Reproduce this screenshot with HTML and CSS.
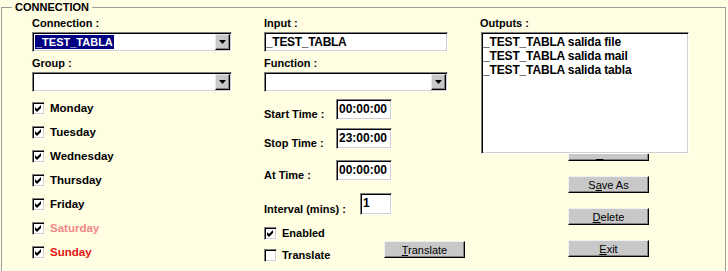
FILE: index.html
```html
<!DOCTYPE html>
<html>
<head>
    <link rel="stylesheet" href="styles.css">
</head>
<body>

<fieldset class="panel">
    <legend>CONNECTION</legend>
    <div class="columns">

        <!-- connection / group / days -->
        <div class="col">
            <label class="field-label">Connection :</label>
            <div class="combo sunken">
                <span class="combo-text"><span class="selected">_TEST_TABLA</span></span>
                <span class="combo-btn"><svg width="7" height="4" viewBox="0 0 7 4"><path d="M0 0H7L3.5 4Z"/></svg></span>
            </div>
            <label class="field-label spaced">Group :</label>
            <div class="combo sunken">
                <span class="combo-text"></span>
                <span class="combo-btn"><svg width="7" height="4" viewBox="0 0 7 4"><path d="M0 0H7L3.5 4Z"/></svg></span>
            </div>
            <div class="days">
                <div class="check-row"><span class="box sunken"><svg width="7" height="7" viewBox="0 0 7 7"><path d="M0 2L2 4L6 0V3L2 7L0 5Z"/></svg></span>Monday</div>
                <div class="check-row"><span class="box sunken"><svg width="7" height="7" viewBox="0 0 7 7"><path d="M0 2L2 4L6 0V3L2 7L0 5Z"/></svg></span>Tuesday</div>
                <div class="check-row"><span class="box sunken"><svg width="7" height="7" viewBox="0 0 7 7"><path d="M0 2L2 4L6 0V3L2 7L0 5Z"/></svg></span>Wednesday</div>
                <div class="check-row"><span class="box sunken"><svg width="7" height="7" viewBox="0 0 7 7"><path d="M0 2L2 4L6 0V3L2 7L0 5Z"/></svg></span>Thursday</div>
                <div class="check-row"><span class="box sunken"><svg width="7" height="7" viewBox="0 0 7 7"><path d="M0 2L2 4L6 0V3L2 7L0 5Z"/></svg></span>Friday</div>
                <div class="check-row saturday"><span class="box sunken"><svg width="7" height="7" viewBox="0 0 7 7"><path d="M0 2L2 4L6 0V3L2 7L0 5Z"/></svg></span>Saturday</div>
                <div class="check-row sunday"><span class="box sunken"><svg width="7" height="7" viewBox="0 0 7 7"><path d="M0 2L2 4L6 0V3L2 7L0 5Z"/></svg></span>Sunday</div>
            </div>
        </div>

        <!-- input / function / schedule -->
        <div class="col">
            <label class="field-label">Input :</label>
            <div class="text-field sunken">_TEST_TABLA</div>
            <label class="field-label spaced">Function :</label>
            <div class="combo sunken">
                <span class="combo-text"></span>
                <span class="combo-btn"><svg width="7" height="4" viewBox="0 0 7 4"><path d="M0 0H7L3.5 4Z"/></svg></span>
            </div>
            <div class="time-row start">
                <span class="time-label">Start Time :</span>
                <span class="text-field time sunken">00:00:00</span>
            </div>
            <div class="time-row stop">
                <span class="time-label">Stop Time :</span>
                <span class="text-field time sunken">23:00:00</span>
            </div>
            <div class="time-row at">
                <span class="time-label">At Time :</span>
                <span class="text-field time sunken">00:00:00</span>
            </div>
            <div class="time-row interval">
                <span class="time-label">Interval (mins) :</span>
                <span class="text-field time short sunken">1</span>
            </div>
            <div class="options">
                <div class="option-list">
                    <div class="check-row small"><span class="box sunken"><svg width="7" height="7" viewBox="0 0 7 7"><path d="M0 2L2 4L6 0V3L2 7L0 5Z"/></svg></span>Enabled</div>
                    <div class="check-row small"><span class="box sunken"></span>Translate</div>
                </div>
                <button class="btn translate"><u>T</u>ranslate</button>
            </div>
        </div>

        <!-- outputs and actions -->
        <div class="col">
            <label class="field-label">Outputs :</label>
            <div class="listbox sunken">
                <div>_TEST_TABLA salida file</div>
                <div>_TEST_TABLA salida mail</div>
                <div>_TEST_TABLA salida tabla</div>
            </div>
            <div class="actions">
                <!-- this one sits under the list box, only its edge and hotkey mark show -->
                <button class="btn behind"><u>S</u>ave</button>
                <button class="btn">S<u>a</u>ve As</button>
                <button class="btn"><u>D</u>elete</button>
                <button class="btn"><u>E</u>xit</button>
            </div>
        </div>

    </div>
</fieldset>

</body>
</html>
```

FILE: styles.css
```css
* {
    box-sizing: border-box;
}
html, body {
    margin: 0;
    height: 100%;
    overflow: hidden;
}
body {
    background-color: #fffde2;
    font-family: "Liberation Sans", Arial, sans-serif;
    font-size: 11px;
    color: #000;
}
.panel {
    margin: 0 2px 0 1px;
    padding: 0;
    border: 1px solid #9c9c9c;
    height: 300px;
    min-width: 0;
}
.panel legend {
    margin-left: 10px;
    padding: 0 3px;
    font-weight: bold;
    font-size: 11px;
    line-height: 15px;
}
.columns {
    display: grid;
    grid-template-columns: 200px 184px 1fr;
    column-gap: 32px;
    padding: 1px 0 0 30px;
}
.field-label {
    display: block;
    height: 14px;
    line-height: 14px;
    font-weight: bold;
}
.field-label.spaced {
    margin-top: 4px;
}

/* win95 style sunken edge */
.sunken {
    background-color: #fff;
    border: 1px solid;
    border-color: #808080 #fff #fff #808080;
    box-shadow: inset 1px 1px #000, inset -1px -1px #d4d0c8;
}

.combo {
    display: flex;
    height: 20px;
    margin-top: 2px;
    padding: 1px;
}
.combo-text {
    flex: 1;
    padding: 1px 0 0 1px;
}
.selected {
    display: inline-block;
    padding: 0 1px;
    line-height: 14px;
    background-color: #000080;
    color: #fff;
    font-weight: bold;
}
.combo-btn {
    width: 15px;
    display: flex;
    align-items: center;
    justify-content: center;
    background-color: #c8c8c8;
    border: 1px solid;
    border-color: #e8e8e8 #000 #000 #e8e8e8;
    box-shadow: inset -1px -1px #808080;
}

.text-field {
    display: block;
    height: 20px;
    margin-top: 2px;
    padding-left: 1px;
    line-height: 18px;
    font-size: 12px;
    font-weight: bold;
    letter-spacing: -0.3px;
}

.days {
    margin-top: 4px;
}
.check-row {
    display: flex;
    align-items: center;
    gap: 5px;
    height: 24px;
    font-weight: bold;
    font-size: 11.5px;
}
.check-row.small {
    height: 22px;
    font-size: 11px;
}
.saturday {
    color: #f08888;
}
.sunday {
    color: #e31515;
}
.box {
    width: 13px;
    height: 13px;
    flex: none;
    display: flex;
    align-items: center;
    justify-content: center;
}

.time-row {
    display: flex;
    align-items: flex-end;
}
.time-row.start {
    margin-top: 7px;
}
.time-row.stop {
    margin-top: 8px;
}
.time-row.at {
    margin-top: 11px;
}
.time-row.interval {
    margin-top: 12px;
}
.time-label {
    width: 72px;
    line-height: 14px;
    margin-bottom: -1px;
    font-weight: bold;
}
.interval .time-label {
    width: 96px;
}
.text-field.time {
    width: 56px;
    height: 21px;
    margin-top: 0;
    padding-left: 2px;
    line-height: 19px;
    letter-spacing: 0;
}
.interval .text-field.time {
    height: 22px;
}
.text-field.short {
    width: 32px;
}

.options {
    display: flex;
    margin-top: 7px;
}
.option-list {
    width: 120px;
    flex: none;
}

.btn {
    flex: none;
    width: 81px;
    height: 17px;
    padding: 0;
    background-color: #c8c8c8;
    border: 1px solid;
    border-color: #f0f0f0 #000 #000 #f0f0f0;
    box-shadow: inset -1px -1px #808080;
    font-family: "Liberation Sans", Arial, sans-serif;
    font-size: 11px;
    line-height: 14px;
    color: #000;
}
.btn.translate {
    margin-top: 19px;
}
.btn.behind {
    color: transparent;
}
.btn.behind u {
    text-decoration-color: #000;
    text-underline-offset: 2px;
}

.listbox {
    position: relative;
    z-index: 1;
    width: 208px;
    height: 122px;
    margin: 2px 0 0 1px;
    padding: 2px 0 0 1px;
    font-size: 12px;
    font-weight: bold;
    line-height: 14px;
    letter-spacing: -0.15px;
}
.actions {
    display: flex;
    flex-direction: column;
    gap: 15px;
    margin: -10px 0 0 88px;
}
```
